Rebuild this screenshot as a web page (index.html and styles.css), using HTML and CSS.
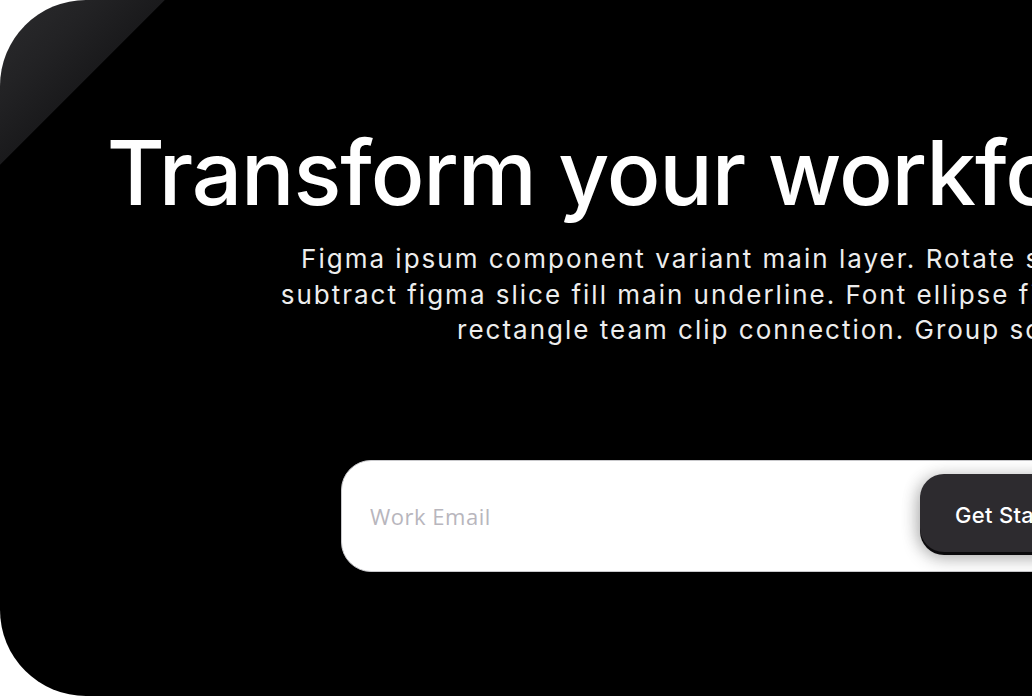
FILE: index.html
```html
<!DOCTYPE html>
<html lang="en">
<head>
<meta charset="utf-8">
<title>Transform your workforce</title>
<link rel="stylesheet" href="styles.css">
</head>
<body>
<main class="stage">
  <section class="hero">
    <h1 class="hero-title">Transform your workforce now.</h1>
    <p class="hero-text">
      <span class="line">Figma ipsum component variant main layer. Rotate selection box</span>
      <span class="line">subtract figma slice fill main underline. Font ellipse fill variant edit.</span>
      <span class="line">rectangle team clip connection. Group sca</span>
    </p>
    <form class="signup" onsubmit="return false">
      <input class="signup-input" type="email" placeholder="Work Email">
      <button class="signup-btn" type="submit">Get Started</button>
    </form>
  </section>
</main>
</body>
</html>
```
FILE: styles.css
```css
html, body {
  margin: 0;
  padding: 0;
  background: #ffffff;
  overflow: hidden;
}
body {
  width: 1032px;
  height: 696px;
  font-family: Inter, "Liberation Sans", sans-serif;
}
.stage {
  width: 1032px;
  height: 696px;
  overflow: hidden;
}
.hero {
  width: 1516px;
  height: 696px;
  box-sizing: border-box;
  padding-top: 128px;
  border-radius: 86px;
  background:
    linear-gradient(135deg, #2c2c2e 0px, #222224 70px, #1a1a1c 116px, #000000 117px, #000000 100%);
  display: flex;
  flex-direction: column;
  align-items: center;
}
.hero-title {
  margin: 0;
  color: #ffffff;
  font-size: 89px;
  line-height: 89px;
  font-weight: 500;
  letter-spacing: -1.1px;
  white-space: nowrap;
}
.hero-text {
  margin: 24px 0 0;
  color: #ededed;
  font-size: 26px;
  line-height: 35.5px;
  letter-spacing: 2px;
  text-align: center;
  white-space: nowrap;
}
.line {
  display: block;
}
.signup {
  margin-top: 112px;
  width: 834px;
  height: 112px;
  box-sizing: border-box;
  background: #ffffff;
  border: 1px solid #c9c9cc;
  border-radius: 30px;
  display: flex;
  align-items: flex-start;
  padding: 13px 61px 0 28px;
}
.signup-input {
  flex: 1;
  min-width: 0;
  height: 78px;
  padding: 3px 0 0;
  border: 0;
  outline: none;
  background: transparent;
  font-family: "Open Sans", Inter, sans-serif;
  font-size: 22px;
  letter-spacing: 0.5px;
  color: #333;
}
.signup-input::placeholder {
  color: #b8b6bd;
}
.signup-btn {
  height: 78px;
  padding: 4px 35px 0;
  border: 0;
  border-radius: 24px;
  background: #2d2b2f;
  color: #ffffff;
  font-family: Inter, sans-serif;
  font-size: 22px;
  font-weight: 500;
  letter-spacing: 0.3px;
  white-space: nowrap;
  box-shadow: 0 3px 0 #0b0a0c, 0 6px 18px rgba(0, 0, 0, 0.3), -4px 0 16px rgba(0, 0, 0, 0.12);
}
```
